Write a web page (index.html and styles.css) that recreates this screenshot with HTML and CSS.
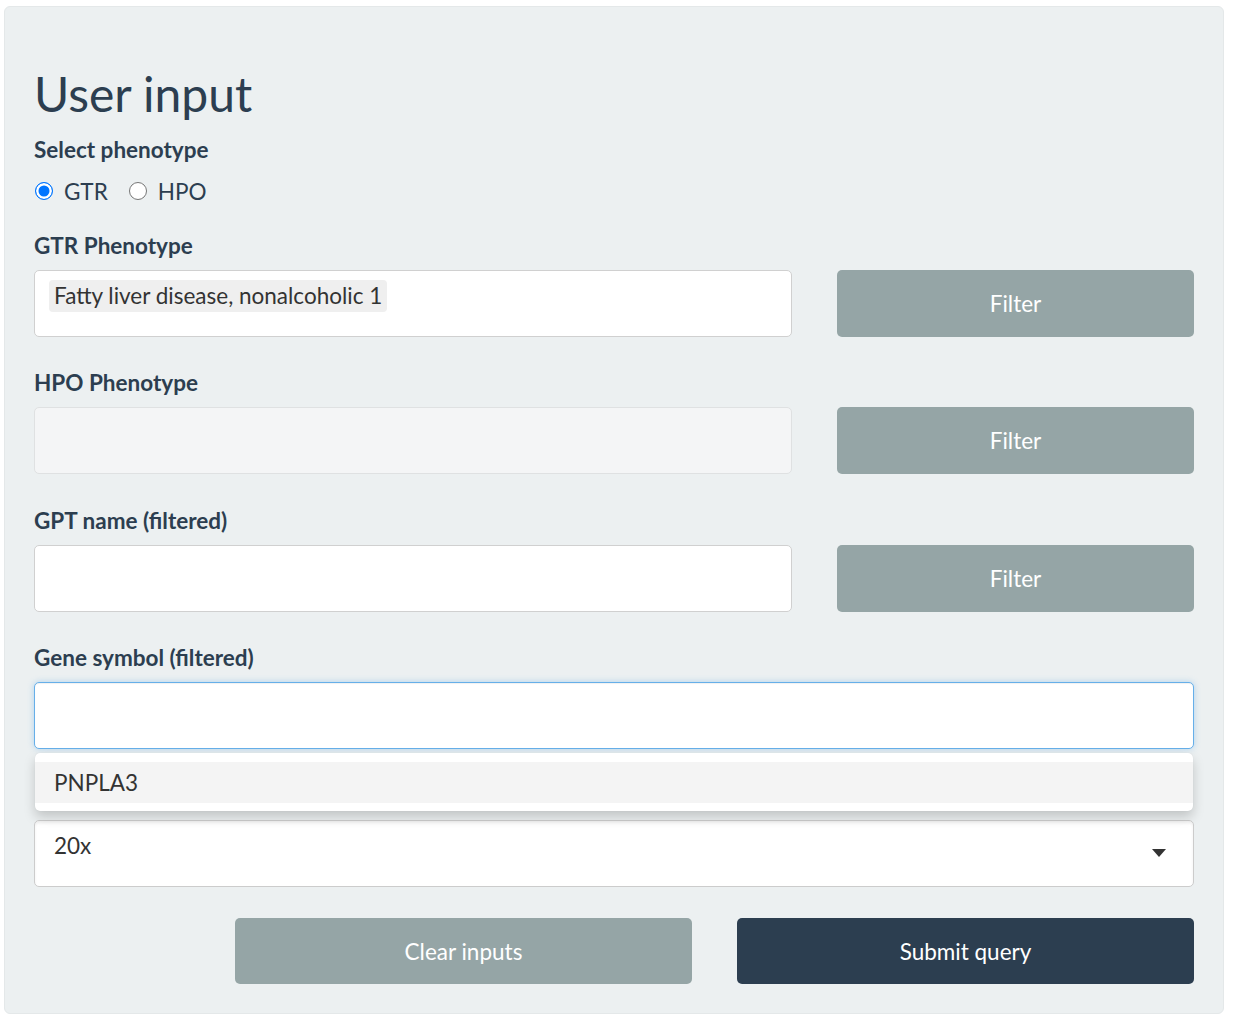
FILE: index.html
```html
<!DOCTYPE html>
<html lang="en">
<head>
<meta charset="utf-8">
<title>User input</title>
<link rel="stylesheet" href="styles.css">
</head>
<body>
<div class="page">
  <div class="well">
    <h2 class="title">User input</h2>

    <div class="group group-radio">
      <label class="control-label">Select phenotype</label>
      <div class="radios">
        <label class="radio-opt"><input type="radio" name="pheno" checked><span>GTR</span></label>
        <label class="radio-opt"><input type="radio" name="pheno"><span>HPO</span></label>
      </div>
    </div>

    <div class="group row2">
      <label class="control-label">GTR Phenotype</label>
      <div class="sel-input"><span class="sel-item">Fatty liver disease, nonalcoholic 1</span></div>
      <button class="btn btn-default">Filter</button>
    </div>

    <div class="group row2">
      <label class="control-label">HPO Phenotype</label>
      <div class="sel-input disabled"></div>
      <button class="btn btn-default">Filter</button>
    </div>

    <div class="group row2">
      <label class="control-label">GPT name (filtered)</label>
      <div class="sel-input"></div>
      <button class="btn btn-default">Filter</button>
    </div>

    <div class="group">
      <label class="control-label">Gene symbol (filtered)</label>
      <div class="sel-wrap">
        <div class="sel-input focus"></div>
        <div class="sel-dropdown">
          <div class="sel-option active">PNPLA3</div>
        </div>
      </div>
    </div>

    <div class="group">
      <label class="control-label"></label>
      <div class="sel-input single">
        <span class="sel-text">20x</span>
        <span class="caret"></span>
      </div>
    </div>

    <div class="actions">
      <button class="btn btn-default wide">Clear inputs</button>
      <button class="btn btn-primary wide">Submit query</button>
    </div>
  </div>
</div>
</body>
</html>
```

FILE: styles.css
```css
* { box-sizing: border-box; }

html, body {
  margin: 0;
  padding: 0;
  background: #ffffff;
}

body {
  font-family: Lato, "Noto Sans", "Liberation Sans", sans-serif;
  font-size: 22.5px;
  color: #2c3e50;
}

.page {
  padding: 6px 13px 6px 4px;
}

.well {
  background: #ecf0f1;
  border: 1px solid #e4e8e9;
  border-radius: 6px;
  padding: 29px 29px 29px 29px;
}

.title {
  margin: 29px 0 10.4px 0;
  font-size: 48px;
  font-weight: 400;
  line-height: 1.2;
  color: #2c3e50;
}

.control-label {
  display: block;
  font-weight: 700;
  font-size: 22.5px;
  line-height: 33px;
  min-height: 33px;
  color: #2c3e50;
}

.group {
  margin-bottom: 29.5px;
}

.group > .control-label {
  margin-bottom: 8px;
}

.group-radio {
  margin-bottom: 21px;
}

.group-radio > .control-label {
  margin-bottom: 9px;
}

.radios {
  display: flex;
  align-items: center;
  gap: 20px;
  height: 33px;
}

.radio-opt {
  display: flex;
  align-items: center;
  gap: 11px;
  font-size: 22.5px;
  line-height: 33px;
  color: #2c3e50;
}

.radio-opt input {
  appearance: none;
  -webkit-appearance: none;
  margin: 0 0 0 1px;
  width: 18px;
  height: 18px;
  border-radius: 50%;
  border: 1px solid #767676;
  background: #ffffff;
}

.radio-opt input:checked {
  border: 1.5px solid #0075ff;
  background: #0075ff;
  box-shadow: inset 0 0 0 2.5px #ffffff;
}

.row2 {
  display: grid;
  grid-template-columns: 758px 357px;
  column-gap: 45px;
  row-gap: 8px;
}

.row2 > .control-label {
  grid-column: 1;
  margin-bottom: 0;
}

.row2 > .sel-input {
  grid-column: 1;
  grid-row: 2;
}

.row2 > .btn {
  grid-column: 2;
  grid-row: 2;
}

.sel-input {
  position: relative;
  height: 67px;
  background: #ffffff;
  border: 1px solid #d0d0d0;
  border-radius: 5px;
  padding: 9px 14px;
  color: #333333;
}

.sel-input.disabled {
  background: #f4f5f6;
  border-color: #dfe1e2;
}

.sel-input.focus {
  border-color: #66afe9;
  box-shadow: inset 0 1px 1px rgba(0, 0, 0, 0.06), 0 0 6px rgba(102, 175, 233, 0.45);
}

.sel-item {
  display: inline-block;
  background: #efefef;
  border-radius: 4px;
  padding: 0 5px;
  font-size: 22.5px;
  line-height: 32px;
  color: #333333;
}

.sel-input.single {
  box-shadow: inset 0 2px 3px rgba(0, 0, 0, 0.06);
  border-color: #cccccc;
}

.sel-text {
  display: inline-block;
  padding: 0 5px;
  font-size: 22.5px;
  line-height: 32px;
  color: #333333;
}

.caret {
  position: absolute;
  right: 27px;
  top: 50%;
  margin-top: -4px;
  width: 0;
  height: 0;
  border-left: 7.5px solid transparent;
  border-right: 7.5px solid transparent;
  border-top: 8px solid #333333;
}

.sel-wrap {
  position: relative;
}

.sel-dropdown {
  position: absolute;
  left: 1px;
  right: 1px;
  top: calc(100% + 4px);
  background: #ffffff;
  border-radius: 5px;
  padding: 9px 0 8px 0;
  box-shadow: 0 6px 12px rgba(0, 0, 0, 0.18), 0 0 1px rgba(0, 0, 0, 0.1);
  z-index: 10;
}

.sel-option {
  height: 41px;
  line-height: 41px;
  padding: 0 19px;
  font-size: 22.5px;
  color: #333333;
}

.sel-option.active {
  background: #f4f4f4;
}

.btn {
  display: flex;
  align-items: center;
  justify-content: center;
  height: 67px;
  border: none;
  border-radius: 5px;
  font-family: Lato, "Noto Sans", "Liberation Sans", sans-serif;
  font-size: 22.5px;
  color: #ffffff;
  padding: 0 16px;
}

.btn-default {
  background: #95a5a6;
}

.btn-primary {
  background: #2c3e50;
}

.actions {
  display: flex;
  justify-content: flex-end;
  gap: 45px;
  margin-top: 31.5px;
}

.btn.wide {
  width: 457px;
  height: 66px;
}
```
